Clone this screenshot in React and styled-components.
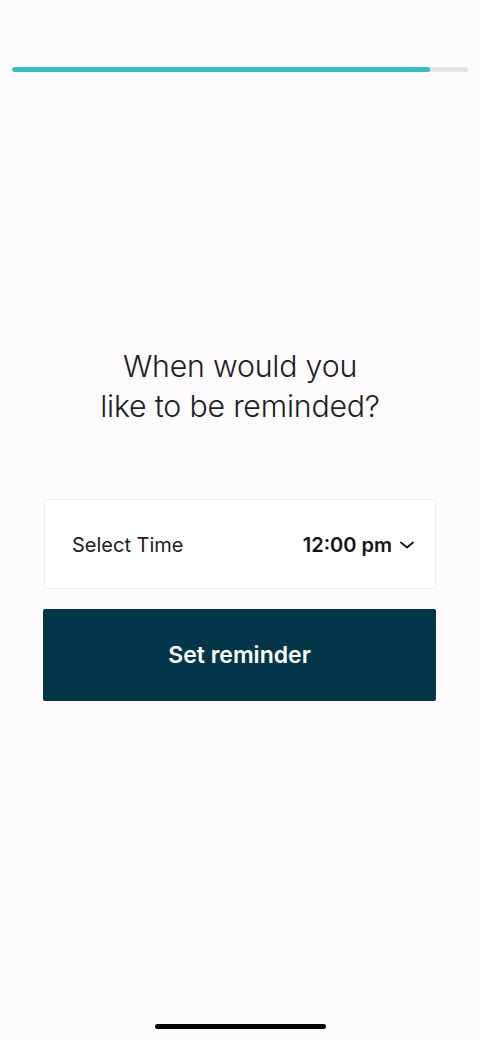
import React from "react";
import styled, { createGlobalStyle } from "styled-components";

const Global = createGlobalStyle`
  html, body { margin: 0; padding: 0; background: #fdfbfd; }
  * { box-sizing: border-box; }
`;

const Page = styled.div`
  height: 1039px;
  display: flex;
  flex-direction: column;
  background: #fdfbfd;
  font-family: Inter, "Liberation Sans", sans-serif;
  color: #1c1c1c;
`;

const Track = styled.div`
  margin: 67px 12px 0;
  height: 5px;
  background: #e4e3e6;
  border-radius: 3px;
  overflow: hidden;
`;

const Fill = styled.div`
  height: 100%;
  background: #36bfc2;
  border-radius: 3px;
`;

const Title = styled.h1`
  margin: 274px 0 0;
  font-size: 30.3px;
  font-weight: 300;
  line-height: 40px;
  text-align: center;
  letter-spacing: -0.2px;
  color: #1e1e1e;
`;

const Form = styled.div`
  margin: 73px 44px 0 43px;
  display: flex;
  flex-direction: column;
  gap: 20px;
`;

const TimeRow = styled.div`
  height: 90px;
  margin-left: 1px;
  display: flex;
  align-items: center;
  justify-content: space-between;
  padding: 2px 21px 0 27px;
  background: #ffffff;
  border: 1px solid #f1eff2;
  border-radius: 2px;
`;

const Label = styled.span`
  font-size: 20px;
  font-weight: 400;
  color: #202020;
`;

const Value = styled.span`
  display: flex;
  align-items: center;
  gap: 8px;
  font-size: 20px;
  font-weight: 600;
  color: #141414;
`;

const Button = styled.button`
  height: 92px;
  border: none;
  border-radius: 2px;
  background: #04364a;
  color: #ffffff;
  font-family: inherit;
  font-size: 23px;
  font-weight: 600;
  cursor: pointer;
`;

const Spacer = styled.div`
  flex: 1;
`;

const HomeBar = styled.div`
  align-self: center;
  width: 171px;
  height: 5px;
  margin-bottom: 10px;
  border-radius: 3px;
  background: #000;
`;

const Chevron = () => (
  <svg width="14" height="8" viewBox="0 0 14 8" fill="none">
    <path d="M1 1.5 L7 6.5 L13 1.5" stroke="#141414" strokeWidth="1.8" strokeLinecap="round" strokeLinejoin="round" />
  </svg>
);

export default function App() {
  const progress = 0.917;
  return (
    <Page>
      <Global />
      <Track>
        <Fill style={{ width: `${progress * 100}%` }} />
      </Track>
      <Title>
        When would you
        <br />
        like to be reminded?
      </Title>
      <Form>
        <TimeRow>
          <Label>Select Time</Label>
          <Value>
            12:00 pm <Chevron />
          </Value>
        </TimeRow>
        <Button>Set reminder</Button>
      </Form>
      <Spacer />
      <HomeBar />
    </Page>
  );
}
